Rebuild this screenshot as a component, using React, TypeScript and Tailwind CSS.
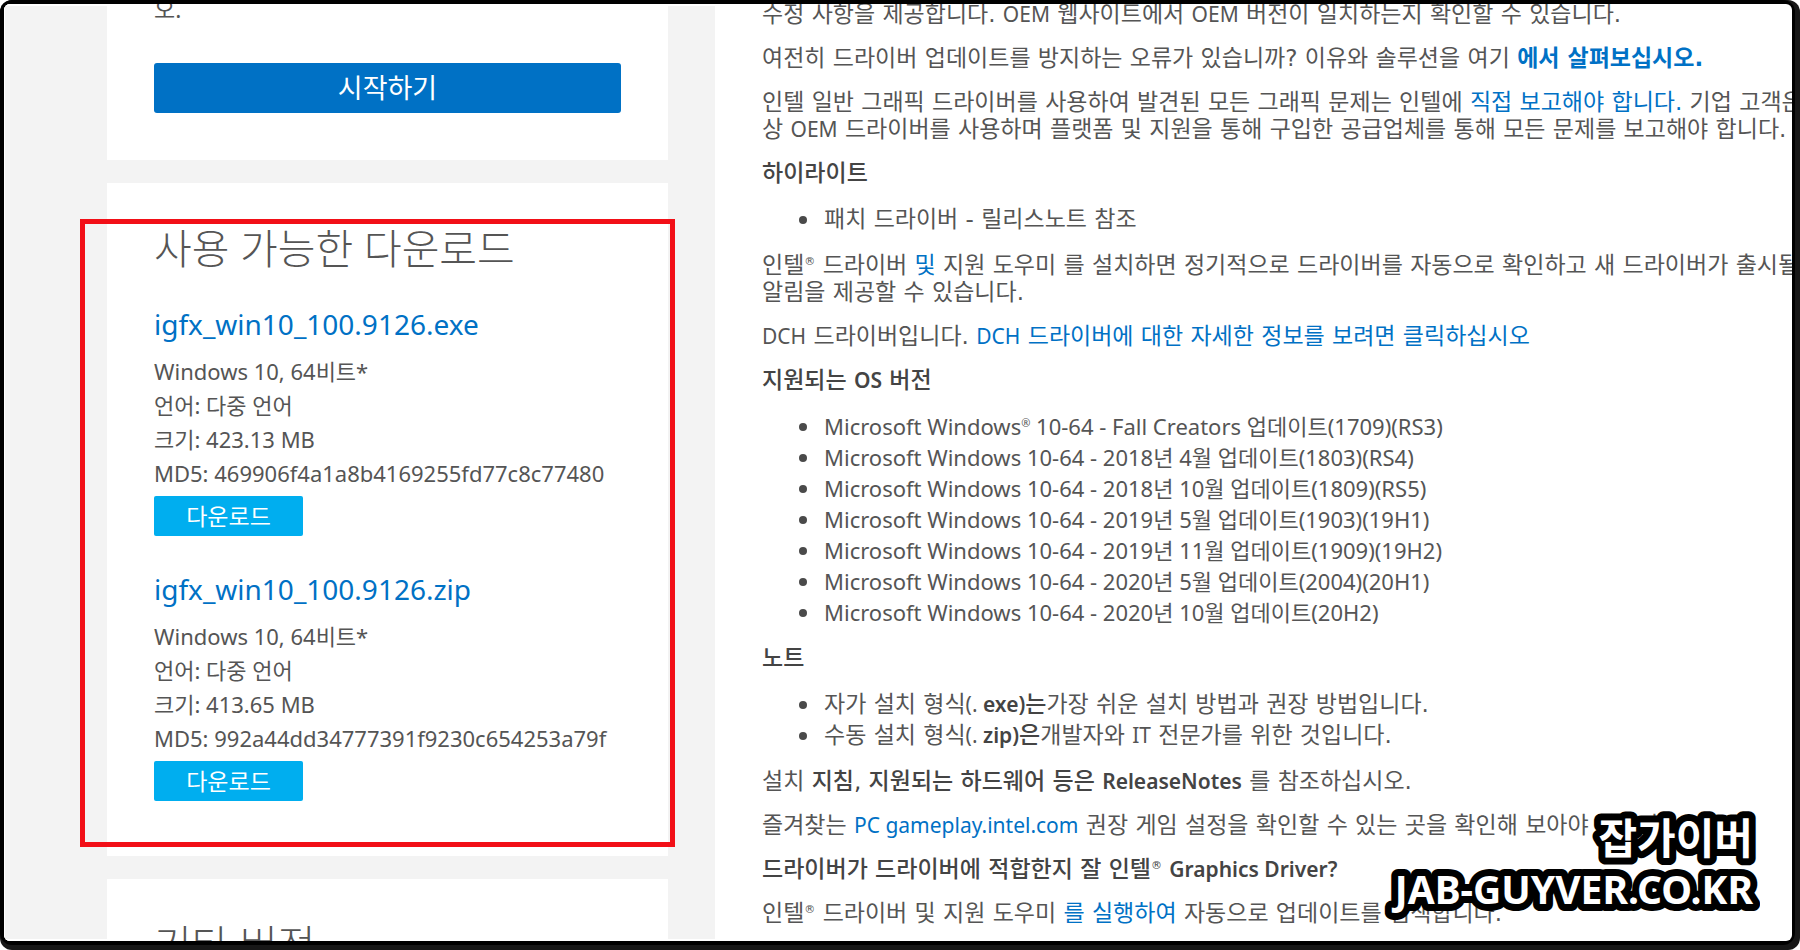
import type { ReactNode } from "react";

type DownloadFile = {
  name: string;
  size: string;
  md5: string;
};

const files: DownloadFile[] = [
  {
    name: "igfx_win10_100.9126.exe",
    size: "423.13 MB",
    md5: "469906f4a1a8b4169255fd77c8c77480",
  },
  {
    name: "igfx_win10_100.9126.zip",
    size: "413.65 MB",
    md5: "992a44dd34777391f9230c654253a79f",
  },
];

const osVersions = [
  "Microsoft Windows 10-64 - 2018년 4월 업데이트(1803)(RS4)",
  "Microsoft Windows 10-64 - 2018년 10월 업데이트(1809)(RS5)",
  "Microsoft Windows 10-64 - 2019년 5월 업데이트(1903)(19H1)",
  "Microsoft Windows 10-64 - 2019년 11월 업데이트(1909)(19H2)",
  "Microsoft Windows 10-64 - 2020년 5월 업데이트(2004)(20H1)",
  "Microsoft Windows 10-64 - 2020년 10월 업데이트(20H2)",
];

/** A run of Latin words inside Korean prose. */
function En({ children, bold }: { children: ReactNode; bold?: boolean }) {
  return (
    <span
      className={
        bold
          ? "font-['Noto_Sans','Noto_Sans_CJK_KR',sans-serif] text-[21px] leading-none font-semibold"
          : "font-['Noto_Sans','Noto_Sans_CJK_KR',sans-serif] text-[21px] leading-none"
      }
    >
      {children}
    </span>
  );
}

function Reg() {
  return <sup className="relative -top-2 align-baseline text-[11px] leading-none">®</sup>;
}

function Link({ children, bold }: { children: ReactNode; bold?: boolean }) {
  return (
    <a href="#" className={bold ? "font-bold text-[#0071c5]" : "text-[#0071c5]"}>
      {children}
    </a>
  );
}

function Strong({ children }: { children: ReactNode }) {
  return <strong className="font-medium text-[#444]">{children}</strong>;
}

function Heading({ children }: { children: ReactNode }) {
  return <h3 className="font-medium text-[#444]">{children}</h3>;
}

function Bullet({ children }: { children: ReactNode }) {
  return (
    <li className="flex items-center pl-[37px]">
      <span className="mr-[17px] size-2 shrink-0 rounded-full bg-[#4a4a4a]" />
      <span>{children}</span>
    </li>
  );
}

function FileBlock({ file }: { file: DownloadFile }) {
  return (
    <article className="mb-[35px]">
      <h3 className="mb-3 text-[28px] leading-9">
        <Link>{file.name}</Link>
      </h3>
      <div className="text-[22px] leading-[34px]">
        <p>Windows 10, 64비트*</p>
        <p>언어: 다중 언어</p>
        <p>크기: {file.size}</p>
        <p>MD5: {file.md5}</p>
      </div>
      <button
        type="button"
        className="mt-1.5 block h-10 w-[149px] rounded-[2px] bg-[#00aeef] text-[23px] leading-none text-white"
      >
        다운로드
      </button>
    </article>
  );
}

function Sidebar() {
  return (
    <aside className="flex flex-col gap-[23px] border-y-2 border-l border-white bg-[#f3f3f3] pr-[47px] pl-[102px]">
      <section className="-mt-3.5 shrink-0 bg-white px-[47px] pb-[47px]">
        <p className="text-[23px] leading-[34px]">오.</p>
        <button
          type="button"
          className="mt-[37px] h-[50px] w-full rounded-[3px] bg-[#0071c5] pb-0.5 text-[27px] leading-none text-white"
        >
          시작하기
        </button>
      </section>

      <section className="relative shrink-0 bg-white px-[47px] pt-[41px] pb-5">
        <h2 className="mb-[34px] text-[41px] leading-[48px] font-light">사용 가능한 다운로드</h2>
        {files.map((file) => (
          <FileBlock key={file.name} file={file} />
        ))}
        <div className="pointer-events-none absolute top-9 -right-[7px] bottom-[9px] -left-[27px] border-[5px] border-[#f20f17]" />
      </section>

      <section className="shrink-0 bg-white px-[47px] pt-[41px] pb-[55px]">
        <h2 className="text-[41px] leading-[48px] font-light">기타 버전</h2>
      </section>
    </aside>
  );
}

function Details() {
  return (
    <main className="-mt-[3px] flex flex-col gap-[17px] overflow-hidden pl-[47px] font-['DejaVu_Sans','Noto_Sans_CJK_KR',sans-serif] text-[23px] leading-[27px] whitespace-nowrap">
      <p>
        수정 사항을 제공합니다. <En>OEM</En> 웹사이트에서 <En>OEM</En> 버전이 일치하는지 확인할 수 있습니다.
      </p>
      <p>
        여전히 드라이버 업데이트를 방지하는 오류가 있습니까? 이유와 솔루션을 여기{" "}
        <Link bold>에서 살펴보십시오.</Link>
      </p>
      <p>
        인텔 일반 그래픽 드라이버를 사용하여 발견된 모든 그래픽 문제는 인텔에{" "}
        <Link>직접 보고해야 합니다.</Link> 기업 고객은
        <br />
        상 <En>OEM</En> 드라이버를 사용하며 플랫폼 및 지원을 통해 구입한 공급업체를 통해 모든 문제를 보고해야 합니다.
      </p>
      <Heading>하이라이트</Heading>
      <ul className="flex flex-col leading-[31px]">
        <Bullet>패치 드라이버 - 릴리스노트 참조</Bullet>
      </ul>
      <p>
        인텔
        <Reg /> 드라이버 <Link>및</Link> 지원 도우미 를 설치하면 정기적으로 드라이버를 자동으로 확인하고 새 드라이버가 출시될
        <br />
        알림을 제공할 수 있습니다.
      </p>
      <p>
        <En>DCH</En> 드라이버입니다.{" "}
        <Link>
          <En>DCH</En> 드라이버에 대한 자세한 정보를 보려면 클릭하십시오
        </Link>
      </p>
      <Heading>
        지원되는 <En bold>OS</En> 버전
      </Heading>
      <ul className="flex flex-col font-['Noto_Sans','Noto_Sans_CJK_KR',sans-serif] text-[22px] leading-[31px]">
        <Bullet>
          Microsoft Windows
          <Reg /> 10-64 - Fall Creators 업데이트(1709)(RS3)
        </Bullet>
        {osVersions.map((version) => (
          <Bullet key={version}>{version}</Bullet>
        ))}
      </ul>
      <Heading>노트</Heading>
      <ul className="flex flex-col leading-[31px]">
        <Bullet>
          자가 설치 형식<En>(. </En>
          <Strong>
            <En bold>exe)</En>는
          </Strong>
          가장 쉬운 설치 방법과 권장 방법입니다.
        </Bullet>
        <Bullet>
          수동 설치 형식<En>(. </En>
          <Strong>
            <En bold>zip)</En>은
          </Strong>
          개발자와 <En>IT</En> 전문가를 위한 것입니다.
        </Bullet>
      </ul>
      <p>
        설치{" "}
        <Strong>
          지침, 지원되는 하드웨어 등은 <En bold>ReleaseNotes</En>
        </Strong>{" "}
        를 참조하십시오.
      </p>
      <p>
        즐겨찾는{" "}
        <Link>
          <En>PC gameplay.intel.com</En>
        </Link>{" "}
        권장 게임 설정을 확인할 수 있는 곳을 확인해 보아야 합니다.
      </p>
      <Heading>
        드라이버가 드라이버에 적합한지 잘 인텔
        <Reg /> <En bold>Graphics Driver?</En>
      </Heading>
      <p>
        인텔
        <Reg /> 드라이버 및 지원 도우미 <Link>를 실행하여</Link> 자동으로 업데이트를 검색합니다.
      </p>
    </main>
  );
}

function Watermark() {
  return (
    <svg
      className="absolute right-10 bottom-[30px] fill-white stroke-black font-bold"
      width="384"
      height="130"
      viewBox="0 0 384 130"
      strokeWidth="14"
      strokeLinejoin="round"
      paintOrder="stroke"
      textAnchor="end"
    >
      <text x="377" y="64" fontSize="42">
        잡가이버
      </text>
      <text x="377" y="114" fontSize="39">
        JAB-GUYVER.CO.KR
      </text>
    </svg>
  );
}

export default function App() {
  return (
    <div className="relative h-screen overflow-hidden bg-white font-['Noto_Sans','Noto_Sans_CJK_KR',sans-serif] text-[#555]">
      <div className="h-full rounded-xl bg-[#171717] pr-[5px] pb-[5px]">
        <div className="h-full rounded-xl bg-black pt-1 pr-[3px] pb-1 pl-1">
          <div className="grid h-full grid-cols-[minmax(0,711fr)_minmax(0,1077fr)] grid-rows-1 overflow-hidden rounded-md bg-white">
            <Sidebar />
            <Details />
          </div>
        </div>
      </div>
      <Watermark />
    </div>
  );
}
